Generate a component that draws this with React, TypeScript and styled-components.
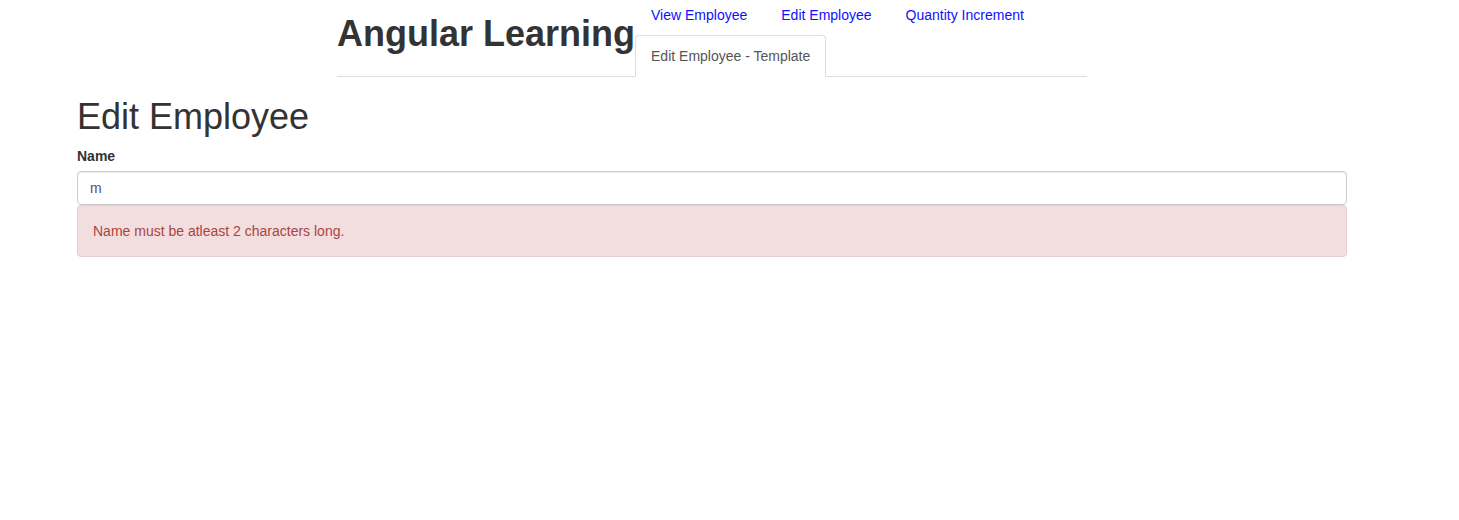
import React from "react";
import styled, { createGlobalStyle } from "styled-components";

const Global = createGlobalStyle`
  * { box-sizing: border-box; }
  html, body { margin: 0; padding: 0; background: #fff; }
  body {
    font-family: "Liberation Sans", Arial, sans-serif;
    font-size: 14px;
    line-height: 1.42857143;
    color: #333;
  }
`;

const Header = styled.header`
  display: flex;
  align-items: flex-start;
  margin-left: 337px;
  width: 750px;
  border-bottom: 1px solid #ddd;
  height: 77px;
`;

const Brand = styled.h1`
  margin: 14px 0 0;
  font-size: 36px;
  font-weight: 700;
  line-height: 1.1;
  color: #333;
  white-space: nowrap;
`;

const Tabs = styled.ul`
  list-style: none;
  margin: -6px 0 0;
  padding: 0;
  display: flex;
  flex-wrap: wrap;
  flex: 1;
`;

const Tab = styled.li`
  margin-right: 2px;
  margin-bottom: -1px;
`;

const TabLink = styled.a<{ $active?: boolean }>`
  display: block;
  padding: 10px 15px;
  line-height: 20px;
  border: 1px solid transparent;
  border-radius: 4px 4px 0 0;
  text-decoration: none;
  cursor: pointer;
  color: ${(p) => (p.$active ? "#555" : "#1010ff")};
  background: ${(p) => (p.$active ? "#fff" : "transparent")};
  border-color: ${(p) => (p.$active ? "#ddd #ddd transparent" : "transparent")};
  height: ${(p) => (p.$active ? "42px" : "auto")};
`;

const Main = styled.main`
  margin-left: 77px;
  width: 1270px;
`;

const Title = styled.h1`
  margin: 20px 0 9px;
  font-size: 36px;
  font-weight: 400;
  line-height: 1.1;
  color: #333;
`;

const Label = styled.label`
  display: block;
  font-weight: 700;
  margin-bottom: 5px;
`;

const Input = styled.input`
  display: block;
  width: 100%;
  height: 34px;
  padding: 6px 12px;
  font-family: inherit;
  font-size: 14px;
  line-height: 1.42857143;
  color: #555;
  background: #fff;
  border: 1px solid #ccc;
  border-radius: 4px;
  box-shadow: inset 0 1px 1px rgba(0, 0, 0, 0.075);
  outline: none;
`;

const Alert = styled.div`
  padding: 15px;
  border: 1px solid #ebccd1;
  border-radius: 4px;
  background: #f2dede;
  color: #a94442;
`;

export default function App() {
  const links = ["View Employee", "Edit Employee", "Quantity Increment"];
  return (
    <>
      <Global />
      <Header>
        <Brand>Angular Learning</Brand>
        <Tabs>
          {links.map((l) => (
            <Tab key={l}>
              <TabLink>{l}</TabLink>
            </Tab>
          ))}
          <Tab>
            <TabLink $active>Edit Employee - Template</TabLink>
          </Tab>
        </Tabs>
      </Header>
      <Main>
        <Title>Edit Employee</Title>
        <Label htmlFor="name">Name</Label>
        <Input id="name" defaultValue="m" />
        <Alert>Name must be atleast 2 characters long.</Alert>
      </Main>
    </>
  );
}
